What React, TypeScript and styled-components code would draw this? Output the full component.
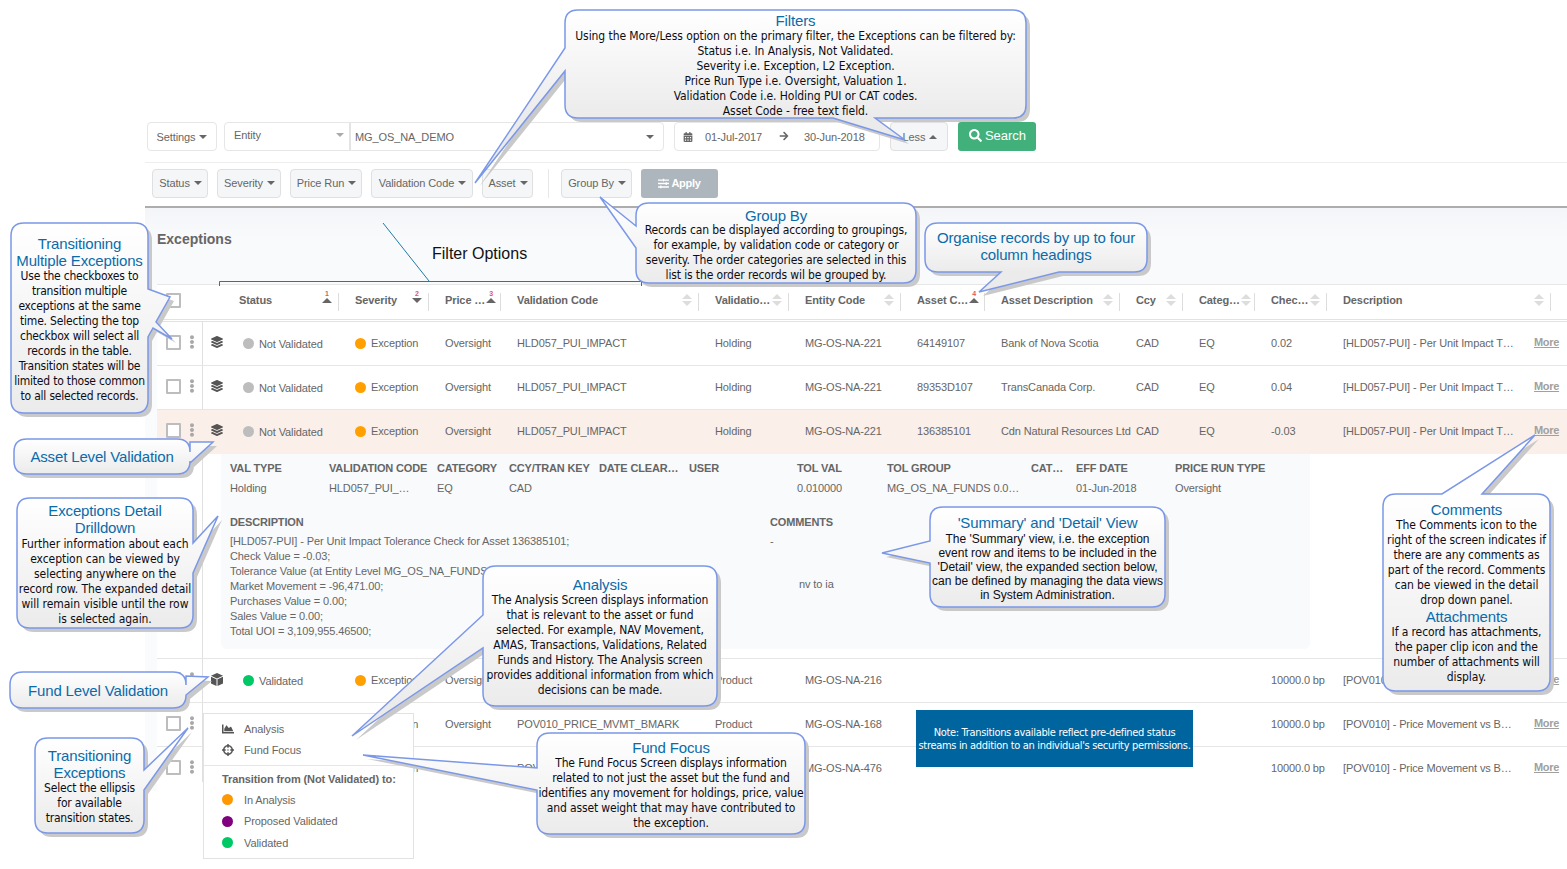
import React from "react";
import styled, { createGlobalStyle } from "styled-components";
import {
  FaArrowRight,
  FaCalendarAlt,
  FaChartArea,
  FaCrosshairs,
  FaEllipsisV,
  FaLayerGroup,
  FaSearch,
  FaSlidersH,
} from "react-icons/fa";

const GlobalStyle = createGlobalStyle`
  html, body {
    margin: 0;
    padding: 0;
    background: #fff;
    overflow: hidden;
  }
  body {
    font-family: "Liberation Sans", Arial, sans-serif;
    font-size: 11px;
    color: #666;
  }
`;

const Page = styled.div`
  position: relative;
  width: 1567px;
  height: 869px;
  overflow: hidden;
  background: #fff;
`;

const Main = styled.main`
  margin-left: 145px;
  padding-top: 122px;
`;

/* toolbars */

const TopBar = styled.div`
  display: flex;
  align-items: stretch;
  height: 29px;
  padding: 0 0 11px 2px;
  border-bottom: 1px solid #eee;
`;

const FilterBar = styled.div`
  display: flex;
  align-items: stretch;
  height: 29px;
  padding: 6px 0 8px 7px;
  border-bottom: 2px solid #adadad;
`;

const Caret = styled.i<{ $up?: boolean; $color?: string }>`
  display: inline-block;
  width: 0;
  height: 0;
  margin-left: 4px;
  border-left: 4px solid transparent;
  border-right: 4px solid transparent;
  ${(p) => (p.$up ? "border-bottom" : "border-top")}: 4px solid ${(p) => p.$color ?? "#666"};
`;

const ToolButton = styled.div<{ $w: number; $gap?: number; $soft?: boolean; $lift?: number; $inset?: number }>`
  display: flex;
  align-items: center;
  justify-content: center;
  box-sizing: border-box;
  width: ${(p) => p.$w}px;
  margin-right: ${(p) => p.$gap ?? 9}px;
  padding: 0 0 ${(p) => p.$lift ?? 0}px ${(p) => p.$inset ?? 0}px;
  border: 1px solid ${(p) => (p.$soft ? "#e0e0e0" : "#e6e6e6")};
  border-radius: 4px;
  background: ${(p) => (p.$soft ? "#f5f6f7" : "#fff")};
  color: #666;
  font-size: 11px;
  letter-spacing: -0.1px;
`;

const EntityGroup = styled.div`
  display: flex;
  box-sizing: border-box;
  width: 440px;
  margin-right: 10px;
  border: 1px solid #e6e6e6;
  border-radius: 4px;
`;

const EntityType = styled.div`
  display: flex;
  align-items: center;
  justify-content: space-between;
  box-sizing: border-box;
  width: 126px;
  padding: 0 5px 3px 9px;
  border-right: 2px solid #e4e4e4;
  letter-spacing: -0.1px;
`;

const EntityValue = styled.div`
  flex: 1;
  display: flex;
  align-items: center;
  justify-content: space-between;
  padding: 0 9px 0 4px;
  letter-spacing: -0.1px;
`;

const DateRange = styled.div`
  display: flex;
  align-items: center;
  box-sizing: border-box;
  width: 206px;
  margin-right: 10px;
  padding-left: 8px;
  border: 1px solid #e6e6e6;
  border-radius: 4px;
  letter-spacing: -0.1px;
  svg {
    color: #666;
  }
`;

const DateText = styled.span<{ $left: number }>`
  margin-left: ${(p) => p.$left}px;
`;

const SearchButton = styled.div`
  display: flex;
  align-items: center;
  justify-content: center;
  gap: 3px;
  box-sizing: border-box;
  width: 78px;
  padding: 0 0 2px 1px;
  border-radius: 3px;
  background: #42b07a;
  color: #fff;
  font-size: 13px;
`;

const BarDivider = styled.div`
  width: 1px;
  margin: 0 12px 0 6px;
  background: #e8e8e8;
`;

const ApplyButton = styled.div`
  display: flex;
  align-items: center;
  justify-content: center;
  gap: 2px;
  width: 77px;
  padding-bottom: 1px;
  border-radius: 3px;
  background: #adb5bd;
  color: #fff;
  font-size: 11px;
  font-weight: bold;
  letter-spacing: -0.3px;
`;

/* exceptions section */

const SectionHead = styled.div`
  box-sizing: border-box;
  height: 76px;
  padding: 23px 0 0 12px;
  background: linear-gradient(#f4f5f8, #f9fafc 30px);
  color: #666;
  font-size: 14px;
  font-weight: bold;
`;

const SectionBody = styled.div`
  padding-left: 12px;
  background: #fafbfd;
`;

const columns =
  "27px 18px 36px 117px 90px 72px 198px 90px 112px 84px 135px 63px 72px 72px 191px 33px";

const HeadRow = styled.div`
  display: grid;
  grid-template-columns: ${columns};
  align-items: center;
  box-sizing: border-box;
  height: 38px;
  border-top: 1px solid #e6e6e6;
  border-bottom: 3px double #e2e2e2;
  background: #fff;
`;

const Check = styled.span`
  display: block;
  box-sizing: border-box;
  width: 15px;
  height: 15px;
  margin: -1px 0 0 9px;
  border: 2px solid #bdbdbd;
  border-radius: 1px;
  background: #fff;
`;

const HeadCheck = styled(Check)`
  grid-column: 1 / span 3;
  margin-top: -4px;
`;

const HeadCell = styled.div<{ $span?: number; $inset?: number }>`
  grid-column: span ${(p) => p.$span ?? 1};
  display: flex;
  align-items: center;
  justify-content: space-between;
  box-sizing: border-box;
  height: 18px;
  margin-top: -1px;
  margin-right: 16px;
  padding: 0 5px 3px ${(p) => p.$inset ?? 0}px;
  border-right: 1px solid #ddd;
  color: #666;
  font-weight: bold;
  letter-spacing: -0.1px;
  white-space: nowrap;
`;

const SortBox = styled.span`
  position: relative;
  display: flex;
  flex-direction: column;
  align-items: center;
  gap: 2px;
  width: 12px;
  flex: none;
`;

const SortArrow = styled.i<{ $down?: boolean; $on?: boolean }>`
  display: block;
  width: 0;
  height: 0;
  border-left: 5px solid transparent;
  border-right: 5px solid transparent;
  ${(p) => (p.$down ? "border-top" : "border-bottom")}: 5px solid ${(p) => (p.$on ? "#666" : "#ddd")};
`;

const SortRank = styled.b`
  position: absolute;
  left: 4px;
  top: -8px;
  color: #e05a5a;
  font-size: 7px;
  line-height: 7px;
`;

const RowGroup = styled.div`
  position: relative;
  background: #fff;
  &::before {
    content: "";
    position: absolute;
    left: 45px;
    top: 0;
    bottom: 9px;
    width: 1px;
    background: #e0e0e0;
  }
`;

const Row = styled.div<{ $picked?: boolean; $last?: boolean }>`
  position: relative;
  display: grid;
  grid-template-columns: ${columns};
  align-items: center;
  box-sizing: border-box;
  height: 44px;
  padding-bottom: 1px;
  border-bottom: 1px solid ${(p) => (p.$picked ? "#fbefe9" : p.$last ? "transparent" : "#e6e6e6")};
  background: ${(p) => (p.$picked ? "#fbefe9" : "transparent")};
  color: #666;
  letter-spacing: -0.12px;
  white-space: nowrap;
`;

const RowDots = styled.span`
  display: flex;
  margin: -2px 0 0 1px;
  color: #a8a8a8;
  font-size: 14px;
`;

const RowIcon = styled.span`
  display: flex;
  margin: -2px 0 0 9px;
  color: #555;
  font-size: 12px;
`;

const Dot = styled.i<{ $color: string }>`
  display: inline-block;
  flex: none;
  width: 11px;
  height: 11px;
  border-radius: 50%;
  background: ${(p) => p.$color};
`;

const StatusCell = styled.div<{ $inset?: number; $drop?: number }>`
  display: flex;
  align-items: center;
  gap: 5px;
  padding-left: ${(p) => p.$inset ?? 0}px;
  span {
    position: relative;
    top: ${(p) => p.$drop ?? 0}px;
  }
`;

const MoreLink = styled.a`
  margin-top: -3px;
  color: #a0a0a0;
  text-decoration: underline;
  font-weight: bold;
  letter-spacing: -0.3px;
`;

/* drilldown under the selected row */

const DetailRow = styled.div`
  position: relative;
  box-sizing: border-box;
  height: 205px;
  padding: 0 257px 9px 64px;
  border-bottom: 1px solid #e6e6e6;
`;

const DetailCard = styled.div`
  box-sizing: border-box;
  height: 195px;
  padding: 7px 0 0 9px;
  border-radius: 0 0 6px 6px;
  background: #f9fafc;
  color: #666;
`;

const DetailGrid = styled.div`
  display: grid;
  grid-template-columns: 99px 108px 72px 90px 90px 108px 90px 144px 45px 99px 1fr;
  grid-auto-rows: 14px;
  align-content: start;
  row-gap: 6px;
  height: 54px;
  line-height: 14px;
  letter-spacing: -0.12px;
  white-space: nowrap;
`;

const DetailLabel = styled.div`
  font-weight: bold;
  letter-spacing: -0.15px;
`;

const DetailNotes = styled.div`
  display: grid;
  grid-template-columns: 540px 1fr;
`;

const NoteText = styled.div`
  line-height: 15px;
  letter-spacing: -0.1px;
  white-space: nowrap;
`;

const NoteLabel = styled(DetailLabel)`
  margin: 0 0 5px;
  line-height: 14px;
`;

const NoteHint = styled.div`
  margin: 29px 0 0 29px;
  letter-spacing: -0.1px;
`;

/* ellipsis menu */

const RowMenu = styled.div`
  position: absolute;
  left: 203px;
  top: 713px;
  box-sizing: border-box;
  width: 211px;
  height: 146px;
  padding-top: 4px;
  border: 1px solid #e2e2e2;
  background: #fff;
  color: #666;
  letter-spacing: -0.1px;
`;

const MenuItem = styled.div<{ $height: number }>`
  display: flex;
  align-items: center;
  height: ${(p) => p.$height}px;
  padding-left: 18px;
  white-space: nowrap;
`;

const MenuGlyph = styled.span`
  display: flex;
  width: 22px;
  flex: none;
  color: #555;
  font-size: 12px;
`;

const MenuDot = styled(Dot)`
  margin-right: 11px;
`;

const MenuRule = styled.div`
  height: 1px;
  margin-top: 5px;
  background: #e6e6e6;
`;

const MenuHeading = styled.div`
  height: 23px;
  padding: 7px 0 0 18px;
  box-sizing: border-box;
  font-weight: bold;
  white-space: nowrap;
`;

/* annotations laid over the screenshot */

type Pt = [number, number];
type Tails = { top?: Pt[]; right?: Pt[]; bottom?: Pt[]; left?: Pt[] };

const balloonPath = (x: number, y: number, w: number, h: number, t: Tails, r = 13) => {
  const via = (list: Pt[] = []) => list.map(([a, b]) => `L${a} ${b}`).join(" ");
  const R = x + w;
  const B = y + h;
  return [
    `M${x + r} ${y}`,
    via(t.top),
    `L${R - r} ${y} Q${R} ${y} ${R} ${y + r}`,
    via(t.right),
    `L${R} ${B - r} Q${R} ${B} ${R - r} ${B}`,
    via(t.bottom),
    `L${x + r} ${B} Q${x} ${B} ${x} ${B - r}`,
    via(t.left),
    `L${x} ${y + r} Q${x} ${y} ${x + r} ${y} Z`,
  ].join(" ");
};

const BalloonBox = styled.div<{ $x: number; $y: number; $w: number; $h: number; $pad: number }>`
  position: absolute;
  left: ${(p) => p.$x}px;
  top: ${(p) => p.$y}px;
  width: ${(p) => p.$w}px;
  height: ${(p) => p.$h}px;
  box-sizing: border-box;
  padding-top: ${(p) => p.$pad}px;
  text-align: center;
  white-space: nowrap;
`;

const BalloonShape = styled.svg`
  position: absolute;
  left: 0;
  top: 0;
  width: 100%;
  height: 100%;
  overflow: visible;
`;

const BalloonTitle = styled.div<{ $gap: number }>`
  position: relative;
  margin: 0 -10px ${(p) => p.$gap}px;
  color: #0a6bab;
  font-family: "Liberation Sans", Arial, sans-serif;
  font-size: 15px;
  line-height: 17px;
  letter-spacing: -0.15px;
`;

const BalloonLine = styled.div<{ $track: number; $lh: number; $plain?: boolean }>`
  position: relative;
  margin: 0 -10px;
  color: #0c0c14;
  font-family: ${(p) =>
    p.$plain ? '"Liberation Sans", Arial' : '"DejaVu Sans Condensed", "Noto Sans"'}, sans-serif;
  font-size: 12px;
  line-height: ${(p) => p.$lh}px;
  letter-spacing: ${(p) => p.$track}px;
`;

type BalloonSpec = {
  x: number;
  y: number;
  w: number;
  h: number;
  pad: number;
  track?: number;
  lh?: number;
  gap?: number;
  plain?: boolean;
  tails: Tails;
  text: (string | { title: string })[];
};

const Balloon: React.FC<BalloonSpec> = ({ x, y, w, h, pad, track = 0, lh = 15, gap = 0, plain, tails, text }) => {
  const gradient = `balloon-${x}-${y}`;
  const d = balloonPath(x, y, w, h, tails);
  return (
    <BalloonBox $x={x} $y={y} $w={w} $h={h} $pad={pad}>
      <BalloonShape viewBox={`${x} ${y} ${w} ${h}`}>
        <defs>
          <linearGradient id={gradient} gradientUnits="userSpaceOnUse" x1="0" y1={y} x2="0" y2={y + h}>
            <stop offset="0" stopColor="#ffffff" />
            <stop offset="1" stopColor="#ebebeb" />
          </linearGradient>
        </defs>
        <path d={d} fill="#c9c9c9" transform="translate(4 4)" />
        <path d={d} fill={`url(#${gradient})`} stroke="#7b98e8" strokeWidth="1.5" />
      </BalloonShape>
      {text.map((line, i) =>
        typeof line === "string" ? (
          <BalloonLine key={i} $track={track} $lh={lh} $plain={plain}>
            {line}
          </BalloonLine>
        ) : (
          <BalloonTitle key={i} $gap={typeof text[i + 1] === "string" ? gap : 0}>
            {line.title}
          </BalloonTitle>
        ),
      )}
    </BalloonBox>
  );
};

const balloons: BalloonSpec[] = [
  {
    x: 565, y: 10, w: 461, h: 108, pad: 2, track: -0.07,
    tails: {
      bottom: [[875, 118], [905, 140], [833, 118]],
      left: [[565, 71], [475, 183], [565, 48]],
    },
    text: [
      { title: "Filters" },
      "Using the More/Less option on the primary filter, the Exceptions can be filtered by:",
      "Status i.e. In Analysis, Not Validated.",
      "Severity i.e. Exception, L2 Exception.",
      "Price Run Type i.e. Oversight, Valuation 1.",
      "Validation Code i.e. Holding PUI or CAT codes.",
      "Asset Code - free text field.",
    ],
  },
  {
    x: 636, y: 203, w: 280, h: 80, pad: 4, gap: -1, track: -0.13,
    tails: { left: [[636, 248], [600, 197], [636, 226]] },
    text: [
      { title: "Group By" },
      "Records can be displayed according to groupings,",
      "for example, by validation code or category or",
      "severity. The order categories are selected in this",
      "list is the order records wil be grouped by.",
    ],
  },
  {
    x: 925, y: 223, w: 222, h: 49, pad: 6,
    tails: { bottom: [[1059, 272], [979, 292], [1001, 272]] },
    text: [{ title: "Organise records by up to four" }, { title: "column headings" }],
  },
  {
    x: 11, y: 223, w: 137, h: 190, pad: 12, track: -0.2,
    tails: {
      right: [[148, 289], [170, 297], [156, 322], [172, 339], [153, 328], [148, 337]],
    },
    text: [
      { title: "Transitioning" },
      { title: "Multiple Exceptions" },
      "Use the checkboxes to",
      "transition multiple",
      "exceptions at the same",
      "time. Selecting the top",
      "checkbox will select all",
      "records in the table.",
      "Transition states will be",
      "limited to those common",
      "to all selected records.",
    ],
  },
  {
    x: 14, y: 439, w: 176, h: 35, pad: 9,
    tails: { right: [[190, 442], [213, 442], [190, 463]] },
    text: [{ title: "Asset Level Validation" }],
  },
  {
    x: 17, y: 498, w: 176, h: 130, pad: 4, gap: 1, track: -0.05,
    tails: { right: [[193, 543], [218, 516], [193, 573]] },
    text: [
      { title: "Exceptions Detail" },
      { title: "Drilldown" },
      "Further information about each",
      "exception can be viewed by",
      "selecting anywhere on the",
      "record row. The expanded detail",
      "will remain visible until the row",
      "is selected again.",
    ],
  },
  {
    x: 10, y: 672, w: 176, h: 36, pad: 10,
    tails: { right: [[186, 676], [208, 677], [186, 695]] },
    text: [{ title: "Fund Level Validation" }],
  },
  {
    x: 35, y: 738, w: 109, h: 95, pad: 9, track: -0.2,
    tails: { right: [[144, 770], [188, 728], [144, 790]] },
    text: [
      { title: "Transitioning" },
      { title: "Exceptions" },
      "Select the ellipsis",
      "for available",
      "transition states.",
    ],
  },
  {
    x: 483, y: 566, w: 234, h: 140, pad: 10, track: -0.13,
    tails: { left: [[483, 648], [352, 736], [483, 615]] },
    text: [
      { title: "Analysis" },
      "The Analysis Screen displays information",
      "that is relevant to the asset or fund",
      "selected. For example, NAV Movement,",
      "AMAS, Transactions, Validations, Related",
      "Funds and History. The Analysis screen",
      "provides additional information from which",
      "decisions can be made.",
    ],
  },
  {
    x: 537, y: 733, w: 268, h: 101, pad: 6, track: -0.14,
    tails: { left: [[537, 790], [363, 755], [537, 768]] },
    text: [
      { title: "Fund Focus" },
      "The Fund Focus Screen displays information",
      "related to not just the asset but the fund and",
      "identifies any movement for holdings, price, value",
      "and asset weight that may have contributed to",
      "the exception.",
    ],
  },
  {
    x: 930, y: 507, w: 235, h: 100, pad: 7, gap: 1, lh: 14, plain: true,
    tails: { left: [[930, 563], [882, 553], [930, 541]] },
    text: [
      { title: "'Summary' and 'Detail' View" },
      "The 'Summary' view, i.e. the exception",
      "event row and items to be included in the",
      "'Detail' view, the expanded section below,",
      "can be defined by managing the data views",
      "in System Administration.",
    ],
  },
  {
    x: 1383, y: 494, w: 167, h: 197, pad: 7, track: -0.1,
    tails: { top: [[1442, 494], [1535, 435], [1482, 494]] },
    text: [
      { title: "Comments" },
      "The Comments icon to the",
      "right of the screen indicates if",
      "there are any comments as",
      "part of the record. Comments",
      "can be viewed in the detail",
      "drop down panel.",
      { title: "Attachments" },
      "If a record has attachments,",
      "the paper clip icon and the",
      "number of attachments will",
      "display.",
    ],
  },
];

const BracketArt = styled.svg`
  position: absolute;
  left: 219px;
  top: 223px;
  width: 423px;
  height: 63px;
`;

const BracketLabel = styled.div`
  position: absolute;
  left: 432px;
  top: 245px;
  color: #111;
  font-size: 16px;
  line-height: 18px;
  white-space: nowrap;
`;

const NoteBox = styled.div`
  position: absolute;
  left: 916px;
  top: 710px;
  width: 277px;
  height: 57px;
  box-sizing: border-box;
  padding-top: 16px;
  background: #00649e;
  color: #fff;
  font-family: "DejaVu Sans Condensed", "Noto Sans", sans-serif;
  font-size: 11px;
  line-height: 13px;
  letter-spacing: -0.32px;
  text-align: center;
  white-space: nowrap;
`;

/* data */

type Rec = {
  icon?: React.ReactNode;
  status: string;
  statusColor: string;
  code: string;
  valType: string;
  entity: string;
  asset?: string;
  assetName?: string;
  ccy?: string;
  cat?: string;
  checkVal: string;
  text: string;
};

const GREY = "#bdbdbd";
const GREEN = "#00c864";
const ORANGE = "#ffa000";

const FundCube = () => (
  <svg width="12" height="13" viewBox="0 0 12 13">
    <path d="M6 0 L12 2.8 L6 5.4 L0 2.8 Z" fill="#555" />
    <path d="M0 3.8 L5.5 6.2 V13 L0 10.4 Z" fill="#555" />
    <path d="M12 3.8 L6.5 6.2 V13 L12 10.4 Z" fill="#555" />
  </svg>
);

const holdingBase = {
  icon: <FaLayerGroup />,
  status: "Not Validated",
  statusColor: GREY,
  code: "HLD057_PUI_IMPACT",
  valType: "Holding",
  entity: "MG-OS-NA-221",
  ccy: "CAD",
  cat: "EQ",
  text: "[HLD057-PUI] - Per Unit Impact T…",
};

const productBase = {
  code: "POV010_PRICE_MVMT_BMARK",
  valType: "Product",
  checkVal: "10000.0 bp",
  text: "[POV010] - Price Movement vs B…",
};

const holdings: Rec[] = [
  { ...holdingBase, asset: "64149107", assetName: "Bank of Nova Scotia", checkVal: "0.02" },
  { ...holdingBase, asset: "89353D107", assetName: "TransCanada Corp.", checkVal: "0.04" },
  { ...holdingBase, asset: "136385101", assetName: "Cdn Natural Resources Ltd", checkVal: "-0.03" },
];

const products: Rec[] = [
  { ...productBase, icon: <FundCube />, status: "Validated", statusColor: GREEN, entity: "MG-OS-NA-216" },
  { ...productBase, status: "Not Validated", statusColor: GREY, entity: "MG-OS-NA-168" },
  { ...productBase, status: "Not Validated", statusColor: GREY, entity: "MG-OS-NA-476" },
];

const headCells: { label: string; rank?: string; down?: boolean; span?: number; inset?: number }[] = [
  { label: "Status", rank: "1", inset: 1 },
  { label: "Severity", rank: "2", down: true },
  { label: "Price …", rank: "3" },
  { label: "Validation Code" },
  { label: "Validatio…" },
  { label: "Entity Code" },
  { label: "Asset C…", rank: "4" },
  { label: "Asset Description" },
  { label: "Ccy" },
  { label: "Categ…" },
  { label: "Chec…" },
  { label: "Description", span: 2 },
];

const detailHeads = [
  "VAL TYPE", "VALIDATION CODE", "CATEGORY", "CCY/TRAN KEY", "DATE CLEAR…", "USER",
  "TOL VAL", "TOL GROUP", "CAT…", "EFF DATE", "PRICE RUN TYPE",
];

const detailValues = [
  "Holding", "HLD057_PUI_…", "EQ", "CAD", "", "",
  "0.010000", "MG_OS_NA_FUNDS 0.0…", "", "01-Jun-2018", "Oversight",
];

const descriptionLines = [
  "[HLD057-PUI] - Per Unit Impact Tolerance Check for Asset 136385101;",
  "Check Value = -0.03;",
  "Tolerance Value (at Entity Level MG_OS_NA_FUNDS = 0.010000);",
  "Market Movement = -96,471.00;",
  "Purchases Value = 0.00;",
  "Sales Value = 0.00;",
  "Total UOI = 3,109,955.46500;",
];

const filterButtons = [
  { label: "Status", w: 56 },
  { label: "Severity", w: 64 },
  { label: "Price Run", w: 72 },
  { label: "Validation Code", w: 102 },
  { label: "Asset", w: 51 },
];

const TableRow: React.FC<{ rec: Rec; picked?: boolean; last?: boolean }> = ({ rec, picked, last }) => (
  <Row $picked={picked} $last={last}>
    <Check />
    <RowDots>
      <FaEllipsisV />
    </RowDots>
    <RowIcon>{rec.icon}</RowIcon>
    <StatusCell $inset={5} $drop={1}>
      <Dot $color={rec.statusColor} />
      <span>{rec.status}</span>
    </StatusCell>
    <StatusCell>
      <Dot $color={ORANGE} />
      <span>Exception</span>
    </StatusCell>
    <div>Oversight</div>
    <div>{rec.code}</div>
    <div>{rec.valType}</div>
    <div>{rec.entity}</div>
    <div>{rec.asset}</div>
    <div>{rec.assetName}</div>
    <div>{rec.ccy}</div>
    <div>{rec.cat}</div>
    <div>{rec.checkVal}</div>
    <div>{rec.text}</div>
    <MoreLink>More</MoreLink>
  </Row>
);

export default function App() {
  return (
    <Page>
      <GlobalStyle />
      <Main>
        <TopBar>
          <ToolButton $w={70} $gap={7}>
            Settings
            <Caret />
          </ToolButton>
          <EntityGroup>
            <EntityType>
              Entity
              <Caret $color="#aaa" />
            </EntityType>
            <EntityValue>
              MG_OS_NA_DEMO
              <Caret />
            </EntityValue>
          </EntityGroup>
          <DateRange>
            <FaCalendarAlt size={10} />
            <DateText $left={12}>01-Jul-2017</DateText>
            <DateText $left={17}>
              <FaArrowRight size={10} />
            </DateText>
            <DateText $left={15}>30-Jun-2018</DateText>
          </DateRange>
          <ToolButton $w={58} $gap={10} $soft $inset={2}>
            Less
            <Caret $up />
          </ToolButton>
          <SearchButton>
            <FaSearch size={13} />
            Search
          </SearchButton>
        </TopBar>
        <FilterBar>
          {filterButtons.map((b) => (
            <ToolButton key={b.label} $w={b.w} $soft $lift={1} $inset={1}>
              {b.label}
              <Caret />
            </ToolButton>
          ))}
          <BarDivider />
          <ToolButton $w={71} $soft $lift={1} $inset={1}>
            Group By
            <Caret />
          </ToolButton>
          <ApplyButton>
            <FaSlidersH size={11} />
            Apply
          </ApplyButton>
        </FilterBar>
        <SectionHead>Exceptions</SectionHead>
        <SectionBody>
          <HeadRow>
            <HeadCheck />
            {headCells.map((c) => (
              <HeadCell key={c.label} $span={c.span} $inset={c.inset}>
                {c.label}
                <SortBox>
                  {c.rank && <SortRank>{c.rank}</SortRank>}
                  {(!c.rank || !c.down) && <SortArrow $on={!!c.rank} />}
                  {(!c.rank || c.down) && <SortArrow $down $on={!!c.rank} />}
                </SortBox>
              </HeadCell>
            ))}
          </HeadRow>
          <RowGroup>
            <TableRow rec={holdings[0]} />
            <TableRow rec={holdings[1]} />
            <TableRow rec={holdings[2]} picked />
            <DetailRow>
              <DetailCard>
                <DetailGrid>
                  {detailHeads.map((h) => (
                    <DetailLabel key={h}>{h}</DetailLabel>
                  ))}
                  {detailValues.map((v, i) => (
                    <div key={i}>{v}</div>
                  ))}
                </DetailGrid>
                <DetailNotes>
                  <div>
                    <NoteLabel>DESCRIPTION</NoteLabel>
                    {descriptionLines.map((l) => (
                      <NoteText key={l}>{l}</NoteText>
                    ))}
                  </div>
                  <div>
                    <NoteLabel>COMMENTS</NoteLabel>
                    <NoteText>-</NoteText>
                    <NoteHint>nv to ia</NoteHint>
                  </div>
                </DetailNotes>
              </DetailCard>
            </DetailRow>
            <TableRow rec={products[0]} />
            <TableRow rec={products[1]} />
            <TableRow rec={products[2]} last />
          </RowGroup>
        </SectionBody>
      </Main>

      <RowMenu>
        <MenuItem $height={21}>
          <MenuGlyph>
            <FaChartArea />
          </MenuGlyph>
          Analysis
        </MenuItem>
        <MenuItem $height={21}>
          <MenuGlyph>
            <FaCrosshairs />
          </MenuGlyph>
          Fund Focus
        </MenuItem>
        <MenuRule />
        <MenuHeading>Transition from (Not Validated) to:</MenuHeading>
        <MenuItem $height={21}>
          <MenuDot $color="#ff9800" />
          In Analysis
        </MenuItem>
        <MenuItem $height={22}>
          <MenuDot $color="#800080" />
          Proposed Validated
        </MenuItem>
        <MenuItem $height={21}>
          <MenuDot $color={GREEN} />
          Validated
        </MenuItem>
      </RowMenu>

      <BracketArt viewBox="219 223 423 63">
        <path
          d="M219.5 286 V281.5 H641.5 V286 M383 223 L429 281"
          fill="none"
          stroke="#1f7ba6"
          strokeWidth="1"
        />
      </BracketArt>
      <BracketLabel>Filter Options</BracketLabel>

      <NoteBox>
        Note: Transitions available reflect pre-defined status
        <br />
        streams in addition to an individual's security permissions.
      </NoteBox>

      {balloons.map((b) => (
        <Balloon key={`${b.x}-${b.y}`} {...b} />
      ))}
    </Page>
  );
}
